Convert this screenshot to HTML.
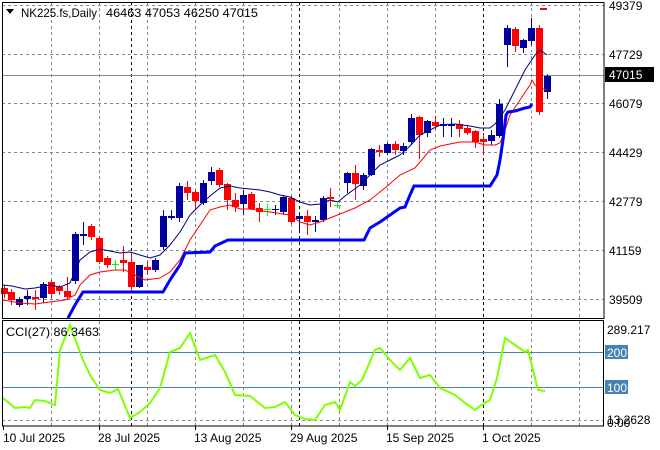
<!DOCTYPE html>
<html><head><meta charset="utf-8"><style>
body{margin:0;background:#fff;width:660px;height:450px;overflow:hidden}
svg{display:block}
text{font-family:"Liberation Sans",sans-serif;font-size:12px;fill:#000}
</style></head><body>
<svg id="s" width="660" height="450" xmlns="http://www.w3.org/2000/svg">
<rect x="0" y="0" width="660" height="450" fill="#fff"/>
<g id="grid" stroke="#7f8a96" stroke-width="1" stroke-dasharray="3,3" fill="none"></g>
<line x1="2" y1="75.5" x2="604" y2="75.5" stroke="#7f8a96"/>
<line x1="2" y1="352.5" x2="603" y2="352.5" stroke="#4682b4"/>
<line x1="2" y1="387.5" x2="603" y2="387.5" stroke="#4682b4"/>
<line x1="2" y1="420.5" x2="603" y2="420.5" stroke="#7f8a96" stroke-dasharray="3,3"/>
<g id="c"></g>
<polyline id="navy" fill="none" stroke="#000080" stroke-width="1"/>
<polyline id="red" fill="none" stroke="#ff0000" stroke-width="1"/>
<polyline id="blue" fill="none" stroke="#0000ff" stroke-width="3"/>
<polyline id="cci" fill="none" stroke="#7fff00" stroke-width="2"/>
<rect x="540" y="8" width="7" height="2" fill="#ff0000"/>
<rect x="2.5" y="2.5" width="601.5" height="316" fill="none" stroke="#000"/>
<rect x="2.5" y="320.5" width="601" height="105.5" fill="none" stroke="#000"/>
<path d="M6 9 L14 9 L10 14 Z" fill="#000"/>
<text x="21" y="17" textLength="76" lengthAdjust="spacingAndGlyphs">NK225.fs,Daily</text>
<text x="106" y="17" textLength="152" lengthAdjust="spacingAndGlyphs">46463 47053 46250 47015</text>
<text x="6" y="336" textLength="93" lengthAdjust="spacingAndGlyphs">CCI(27) 86.3463</text>
<g id="ticks" stroke="#000"></g>
<text x="609" y="10">49379</text>
<text x="609" y="59">47729</text>
<rect x="605" y="67" width="49" height="15" fill="#000"/>
<text x="609" y="79" style="fill:#fff">47015</text>
<text x="609" y="108">46079</text>
<text x="609" y="157">44429</text>
<text x="609" y="206">42779</text>
<text x="609" y="255">41159</text>
<text x="609" y="304">39509</text>
<text x="607" y="334">289.217</text>
<rect x="605" y="345" width="23" height="14" fill="#4682b4"/>
<text x="607" y="357" style="fill:#fff">200</text>
<rect x="605" y="380" width="23" height="14" fill="#4682b4"/>
<text x="607" y="392" style="fill:#fff">100</text>
<text x="607" y="424">13.2628</text>
<text x="607" y="427">0.00</text>
<text x="3" y="442">10 Jul 2025</text>
<text x="98" y="442">28 Jul 2025</text>
<text x="194" y="442">13 Aug 2025</text>
<text x="290" y="442">29 Aug 2025</text>
<text x="386" y="442">15 Sep 2025</text>
<text x="482" y="442">1 Oct 2025</text>
</svg>
<script>
var NS="http://www.w3.org/2000/svg";
function el(p,t,a){var e=document.createElementNS(NS,t);for(var k in a)e.setAttribute(k,a[k]);p.appendChild(e);return e;}
var g=document.getElementById('grid');
[5,54,103,152,201,250,299].forEach(function(y){el(g,'line',{x1:2,x2:604,y1:y+.5,y2:y+.5});});
[51,99,147,195,243,291,339,387,435,531,579].forEach(function(x){el(g,'line',{x1:x+.5,x2:x+.5,y1:2,y2:318});el(g,'line',{x1:x+.5,x2:x+.5,y1:321,y2:426});});
[131,299,483].forEach(function(x){el(g,'line',{x1:x+.5,x2:x+.5,y1:2,y2:318,stroke:'#000'});el(g,'line',{x1:x+.5,x2:x+.5,y1:321,y2:426,stroke:'#000'});});
var t=document.getElementById('ticks');
[3,99,195,291,387,483].forEach(function(x){el(t,'line',{x1:x+.5,x2:x+.5,y1:426,y2:430});});
var C=[[4,285,288,294,298,'r'],[11,289,292,300,305,'r'],[19,297,299,305,307,'b'],[27,290,296,299,305,'b'],[35,290,297,299,310,'r'],[43,282,284,298,303,'b'],[51,280,282,294,298,'r'],[59,285,287,291,295,'r'],[67,277,291,297,300,'r'],[75,232,234,281,284,'b'],[83,222,234,236,245,'b'],[91,224,226,237,240,'r'],[99,236,238,262,264,'r'],[107,256,258,265,268,'r'],[115,260,264,264,270,'g'],[123,246,260,263,272,'r'],[131,253,262,287,293,'r'],[139,265,265,287,288,'b'],[147,262,267,270,275,'r'],[155,258,260,270,272,'b'],[163,210,216,247,250,'b'],[171,210,216,218,220,'b'],[179,183,186,218,222,'b'],[187,181,187,193,200,'r'],[195,190,192,201,210,'r'],[203,180,183,203,205,'b'],[211,167,172,181,185,'b'],[219,168,170,185,187,'r'],[227,183,184,200,210,'r'],[235,193,200,207,212,'r'],[243,190,195,204,215,'b'],[251,192,194,209,210,'r'],[259,203,208,212,222,'r'],[267,204,209,209,216,'g'],[275,205,209,210,215,'b'],[283,195,197,212,215,'b'],[291,196,198,222,224,'r'],[299,212,216,219,232,'b'],[307,210,216,222,235,'r'],[315,216,220,222,232,'b'],[323,196,198,220,222,'b'],
[330,188,197,199,207,'r'],[337,203,205,205,208,'g'],[347,172,173,183,193,'b'],[355,165,173,184,200,'r'],[363,173,175,186,190,'b'],[371,148,149,175,176,'b'],[379,145,150,152,157,'r'],[387,143,144,153,155,'b'],[395,141,144,150,155,'r'],[403,143,146,151,155,'b'],[411,114,118,142,145,'b'],[419,116,117,135,159,'r'],[427,120,121,133,137,'b'],[435,116,122,126,130,'r'],[443,118,124,126,137,'b'],[451,118,124,126,137,'b'],[459,120,124,129,137,'r'],[467,125,128,133,135,'r'],[475,130,131,142,148,'r'],[483,133,139,142,155,'r'],[491,130,135,141,145,'b'],[499,99,104,136,138,'b'],[507,25,28,45,67,'b'],[515,27,29,46,52,'r'],[523,39,40,48,53,'b'],[531,18,28,41,45,'b'],[539,25,28,112,115,'r'],[547,74,76,92,99,'b']];
var cg=document.getElementById('c');
var col={r:'#ff0000',b:'#0000a0',g:'#00ff00'};
C.forEach(function(c){var x=c[0],f=col[c[5]];
el(cg,'line',{x1:x+.5,x2:x+.5,y1:c[1],y2:c[4],stroke:f});
var h=Math.max(1,c[3]-c[2]);
if(c[5]=='g')el(cg,'line',{x1:x-3,x2:x+4,y1:c[2]+.5,y2:c[2]+.5,stroke:f});
else el(cg,'rect',{x:x-3,y:c[2],width:7,height:h,fill:f});});
function pl(id,s){document.getElementById(id).setAttribute('points',s);}
pl('navy',"3,285 12,286 25,289 35,288 50,285 60,287 70,283 80,260 90,252 100,249 110,251 120,253 130,252 140,255 150,258 160,255 170,245 180,232 190,215 200,205 210,196 220,188 230,186 240,188 250,189 260,190 270,192 280,195 290,197 300,202 310,205 320,204 330,200 338,202 345,196 360,185 370,175 380,165 390,160 400,155 410,146 420,135 430,130 440,125 455,124 470,126 480,128 490,128 495,124 505,110 515,90 525,70 535,55 540,50 547,55");
pl('red',"3,300 20,303 35,304 50,302 65,300 75,295 80,285 90,275 100,272 115,270 125,270 135,275 145,280 160,278 170,272 180,260 190,240 200,225 210,210 220,207 230,205 240,209 250,209 270,212 290,215 300,222 310,225 320,222 330,218 340,214 355,208 370,200 385,188 400,175 415,168 420,162 430,150 440,146 460,142 475,142 485,145 495,145 500,143 505,130 510,115 520,100 530,85 532,80 535,85 540,88 547,90");
pl('blue',"68,318 75,305 83,292 163,292 170,280 180,265 185,253 210,252 215,246 228,240 364,240 370,228 380,222 390,215 400,208 405,207 410,195 414,186 490,186 497,175 500,160 503,140 506,115 508,112 515,111 525,108 530,107 532,104");
pl('cci',"3,398 15,408 25,407 30,408 35,400 45,401 55,405 60,350 70,325 83,360 90,375 100,390 110,393 118,389 130,418 140,412 150,403 160,388 170,352 180,348 190,333 200,360 215,355 225,372 235,395 250,396 265,408 275,407 285,402 295,415 305,419 315,420 325,405 335,402 340,410 350,382 355,386 362,380 375,350 380,348 390,360 400,370 410,358 420,378 430,375 440,388 455,395 465,403 475,410 480,406 490,400 497,378 505,338 515,345 525,352 528,350 538,390 545,391");
</script>
</body></html>
